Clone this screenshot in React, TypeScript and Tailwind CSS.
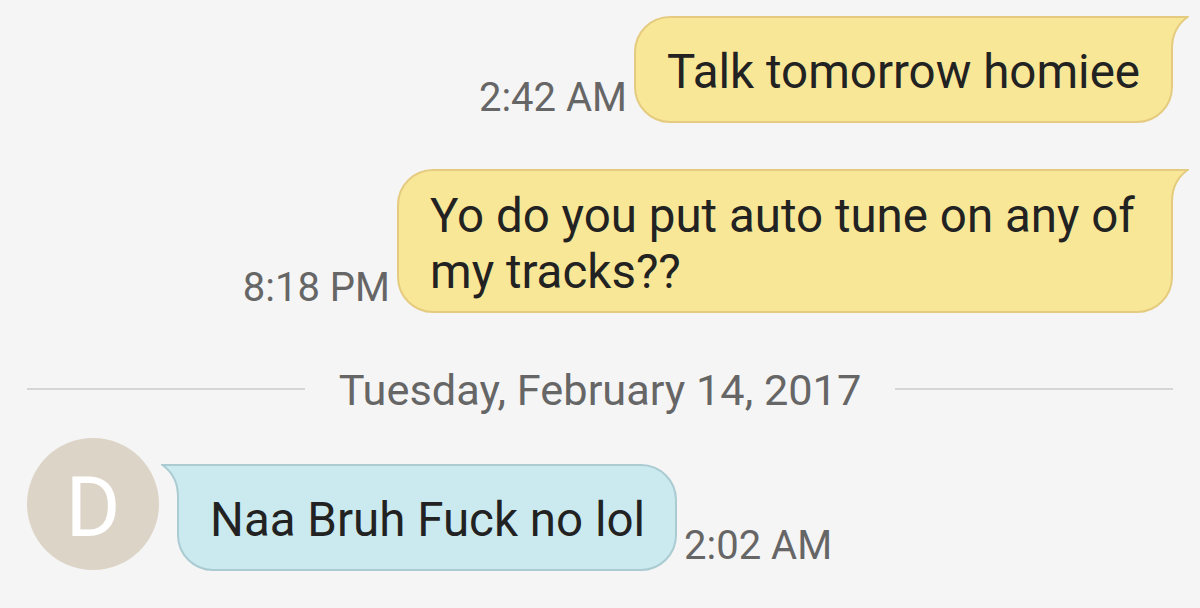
import clsx from "clsx"

export default function App() {
  return (
    <main className="h-[608px] w-[1200px] overflow-hidden bg-[#f5f5f5] pt-4 font-['Roboto',sans-serif] text-[#222222]">
      <Message side="sent" time="2:42 AM" bubbleClassName="w-[539px] pt-4 pb-3">
        Talk tomorrow homiee
      </Message>

      <Message side="sent" time="8:18 PM" bubbleClassName="w-[776px] pt-[17px] pb-[11px]" className="mt-[46px]">
        Yo do you put auto tune on any of my tracks??
      </Message>

      <DateDivider label="Tuesday, February 14, 2017" />

      <div className="ml-[27px] mt-[24px] flex">
        <Avatar initial="D" />
        <Message
          side="received"
          time="2:02 AM"
          bubbleClassName="w-[500px] pt-4 pb-3"
          className="ml-[18px] mt-[26px] self-start"
        >
          Naa Bruh Fuck no lol
        </Message>
      </div>
    </main>
  )
}

interface MessageProps {
  side: "sent" | "received"
  time: string
  bubbleClassName: string
  className?: string
  children: string
}

function Message({ side, time, bubbleClassName, className, children }: MessageProps) {
  const sent = side === "sent"

  return (
    <div className={clsx("flex items-end gap-[7px]", sent && "mr-[27px] justify-end", className)}>
      {sent && <Time value={time} />}
      <div
        className={clsx(
          "relative flex min-h-[107px] items-center border-2 pl-[31px] pr-[20px] text-[47.5px] leading-[56px]",
          bubbleClassName,
          sent
            ? "rounded-[36px] rounded-tr-none border-[#e5cb80] bg-[#f8e796]"
            : "rounded-[36px] rounded-tl-none border-[#a9cbd1] bg-[#cbeaef]",
        )}
      >
        <p>{children}</p>
        <Tail sent={sent} />
      </div>
      {!sent && <Time value={time} />}
    </div>
  )
}

// Curved corner that runs out past the top edge of the bubble
function Tail({ sent }: { sent: boolean }) {
  return (
    <svg
      viewBox="0 0 20 36"
      className={clsx("absolute -top-[2px] h-[36px] w-[20px]", sent ? "-right-[18px]" : "-left-[18px] -scale-x-100")}
    >
      <path d="M0 0H20C10 7 4 18 4 32V36H0Z" fill={sent ? "#f8e796" : "#cbeaef"} />
      <path
        d="M0 1H18.5C9 8 3 19 3 32V36"
        fill="none"
        stroke={sent ? "#e5cb80" : "#a9cbd1"}
        strokeWidth="2"
      />
    </svg>
  )
}

function Time({ value }: { value: string }) {
  return <span className="mb-[2px] whitespace-nowrap text-[40px] leading-[46px] text-[#666666]">{value}</span>
}

function DateDivider({ label }: { label: string }) {
  return (
    <div className="mx-[27px] mt-[50px] flex h-[51px] items-center justify-between">
      <div className="h-[2px] w-[278px] bg-[#d6d6d6]" />
      <span className="whitespace-nowrap pt-1 text-[43.3px] leading-[51px] text-[#666666]">{label}</span>
      <div className="h-[2px] w-[278px] bg-[#d6d6d6]" />
    </div>
  )
}

function Avatar({ initial }: { initial: string }) {
  return (
    <div className="flex size-[132px] items-center justify-center rounded-full bg-[#dcd4c7] pt-2 text-[84px] leading-none text-white">
      {initial}
    </div>
  )
}
